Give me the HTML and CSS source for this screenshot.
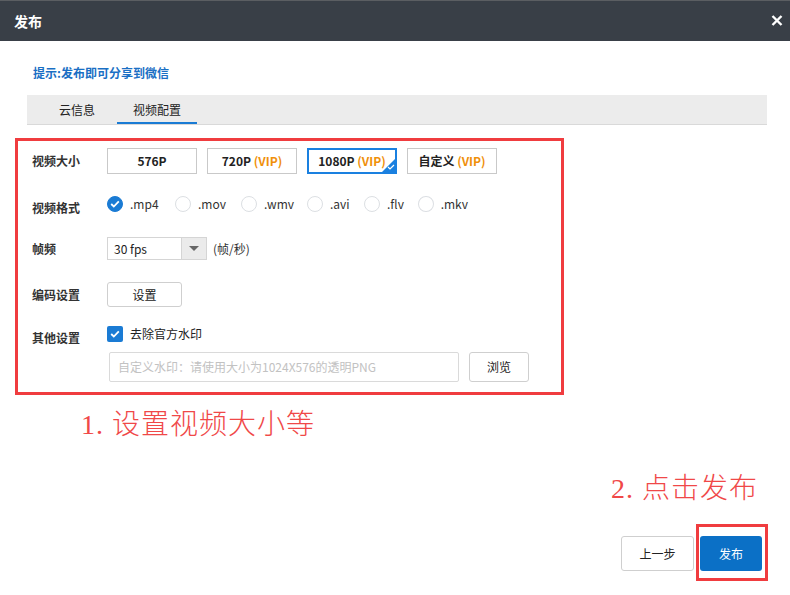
FILE: index.html
```html
<!DOCTYPE html>
<html lang="zh-CN">
<head>
<meta charset="utf-8">
<title>发布</title>
<link rel="stylesheet" href="styles.css">
</head>
<body>
<div class="dialog">
  <header class="titlebar">
    <span class="title">发布</span>
    <svg class="close" width="12" height="11" viewBox="0 0 12 11"><path d="M1.5 1 L10.5 10 M10.5 1 L1.5 10" stroke="#fff" stroke-width="2.4" fill="none"/></svg>
  </header>
  <main class="content">
    <p class="hint">提示:发布即可分享到微信</p>
    <nav class="tabs">
      <span class="tab">云信息</span>
      <span class="tab active">视频配置</span>
    </nav>
    <section class="form">
      <div class="row row-size">
        <span class="label">视频大小</span>
        <div class="sizes">
          <span class="size-btn">576P</span>
          <span class="size-btn">720P <em>(VIP)</em></span>
          <span class="size-btn selected">1080P <em>(VIP)</em>
            <span class="corner"><svg width="8" height="6" viewBox="0 0 8 6"><path d="M1 3 L3 5 L7 1" stroke="#fff" stroke-width="1.2" fill="none"/></svg></span>
          </span>
          <span class="size-btn">自定义 <em>(VIP)</em></span>
        </div>
      </div>
      <div class="row row-format">
        <span class="label">视频格式</span>
        <div class="radios">
          <span class="radio r-mp4 checked"><span class="dot"><svg width="10" height="8" viewBox="0 0 10 8"><path d="M1.2 4 L3.8 6.5 L8.8 1.3" stroke="#fff" stroke-width="1.8" fill="none"/></svg></span>.mp4</span>
          <span class="radio r-mov"><span class="dot"></span>.mov</span>
          <span class="radio r-wmv"><span class="dot"></span>.wmv</span>
          <span class="radio r-avi"><span class="dot"></span>.avi</span>
          <span class="radio r-flv"><span class="dot"></span>.flv</span>
          <span class="radio r-mkv"><span class="dot"></span>.mkv</span>
        </div>
      </div>
      <div class="row row-fps">
        <span class="label">帧频</span>
        <div class="select">
          <span class="select-value">30 fps</span>
          <span class="select-arrow"><span class="tri"></span></span>
        </div>
        <span class="unit">(帧/秒)</span>
      </div>
      <div class="row row-encode">
        <span class="label">编码设置</span>
        <span class="btn btn-set">设置</span>
      </div>
      <div class="row row-other">
        <span class="label">其他设置</span>
        <span class="checkbox"><svg width="10" height="8" viewBox="0 0 10 8"><path d="M1.2 4 L3.8 6.5 L8.8 1.3" stroke="#fff" stroke-width="1.8" fill="none"/></svg></span>
        <span class="check-text">去除官方水印</span>
      </div>
      <div class="row row-watermark">
        <span class="input">自定义水印：请使用大小为1024X576的透明PNG</span>
        <span class="btn btn-browse">浏览</span>
      </div>
    </section>
    <div class="note note1">1. 设置视频大小等</div>
    <div class="note note2">2. 点击发布</div>
    <footer class="actions">
      <span class="btn btn-prev">上一步</span>
      <span class="publish-wrap"><span class="btn btn-publish">发布</span></span>
    </footer>
  </main>
</div>
</body>
</html>
```
FILE: styles.css
```css
html, body {
  margin: 0;
  padding: 0;
  background: #fff;
}
body {
  width: 790px;
  height: 595px;
  overflow: hidden;
  font-family: "Noto Sans CJK SC", "Liberation Sans", sans-serif;
  font-size: 12px;
  color: #333;
}
.dialog {
  width: 790px;
  height: 595px;
  display: flex;
  flex-direction: column;
}
.titlebar {
  height: 40px;
  border-top: 1px solid #5b5e62;
  background: #393f47;
  display: flex;
  align-items: center;
  justify-content: space-between;
  padding: 0 7px 0 14px;
}
.title {
  color: #fff;
  font-size: 14px;
  font-weight: bold;
  line-height: 16px;
}
.close {
  display: block;
  margin-top: -1px;
}
.content {
  position: relative;
  flex: 1;
  display: flex;
  flex-direction: column;
}
.hint {
  margin: 24px 0 0 33px;
  line-height: 16px;
  font-size: 12px;
  font-weight: bold;
  color: #1a6fc4;
}
.tabs {
  margin: 14px 0 0 27px;
  width: 730px;
  height: 29px;
  padding-left: 10px;
  background: #ececec;
  border-bottom: 1px solid #d9d9d9;
  display: flex;
}
.tab {
  width: 80px;
  text-align: center;
  line-height: 29px;
  color: #222;
  font-size: 12px;
  box-sizing: border-box;
}
.tab.active {
  border-bottom: 2px solid #1a7bd4;
}
.form {
  margin: 13px 0 0 15px;
  width: 529px;
  height: 244px;
  border: 3px solid #f03c3f;
  padding: 7px 0 0 14px;
  display: flex;
  flex-direction: column;
}
.row {
  display: flex;
  align-items: center;
}
.label {
  width: 75px;
  font-weight: bold;
  color: #333;
  line-height: 16px;
  flex: none;
}
.sizes {
  display: flex;
  gap: 10px;
}
.size-btn {
  position: relative;
  width: 90px;
  height: 26px;
  box-sizing: border-box;
  border: 1px solid #c9c9c9;
  text-align: center;
  line-height: 24px;
  font-weight: bold;
  color: #222;
}
.size-btn em {
  font-style: normal;
  color: #f0900a;
}
.size-btn.selected {
  border: 2px solid #1a80e0;
  line-height: 22px;
}
.corner {
  position: absolute;
  right: 0;
  bottom: 0;
  width: 0;
  height: 0;
  border-left: 13px solid transparent;
  border-bottom: 13px solid #1a80e0;
}
.corner svg {
  position: absolute;
  left: -8px;
  top: 5px;
}
.row-format {
  margin-top: 19px;
  height: 22px;
}
.row-format .label {
  margin-top: 8px;
}
.radios {
  display: flex;
}
.radio {
  display: flex;
  align-items: center;
  height: 16px;
  line-height: 16px;
  color: #333;
  flex: none;
}
.r-mp4 { width: 68px; }
.r-mov { width: 66px; }
.r-wmv { width: 66px; }
.r-avi { width: 57px; }
.r-flv { width: 54px; }
.r-mkv { width: 50px; }
.dot {
  width: 16px;
  height: 16px;
  box-sizing: border-box;
  border: 1px solid #dcdfe3;
  border-radius: 50%;
  margin-right: 7px;
  display: flex;
  align-items: center;
  justify-content: center;
}
.radio.checked .dot {
  background: #1a7bd4;
  border-color: #1a7bd4;
}
.row-fps {
  margin-top: 22px;
}
.select {
  width: 100px;
  height: 23px;
  box-sizing: border-box;
  border: 1px solid #d5d5d5;
  display: flex;
}
.select-value {
  flex: 1;
  padding-left: 6px;
  line-height: 21px;
  color: #222;
}
.select-arrow {
  width: 24px;
  background: #ebebeb;
  border-left: 1px solid #d5d5d5;
  display: flex;
  align-items: center;
  justify-content: center;
}
.tri {
  width: 0;
  height: 0;
  border-left: 5px solid transparent;
  border-right: 5px solid transparent;
  border-top: 5px solid #666;
}
.unit {
  margin-left: 6px;
  color: #333;
}
.btn {
  box-sizing: border-box;
  border: 1px solid #cfcfcf;
  border-radius: 3px;
  background: #fff;
  text-align: center;
  color: #222;
  display: inline-block;
}
.row-encode {
  margin-top: 22px;
}
.btn-set {
  width: 75px;
  height: 25px;
  line-height: 23px;
}
.row-other {
  margin-top: 19px;
  height: 16px;
}
.row-other .label {
  margin-top: 8px;
}
.checkbox {
  width: 16px;
  height: 16px;
  border-radius: 2px;
  background: #1a7bd4;
  display: flex;
  align-items: center;
  justify-content: center;
  margin-right: 7px;
}
.check-text {
  line-height: 16px;
  color: #222;
}
.row-watermark {
  margin-top: 10px;
  padding-left: 77px;
}
.input {
  width: 350px;
  height: 30px;
  box-sizing: border-box;
  border: 1px solid #dadada;
  border-radius: 2px;
  padding-left: 8px;
  line-height: 28px;
  color: #c2c2c2;
}
.btn-browse {
  margin-left: 10px;
  width: 60px;
  height: 30px;
  line-height: 28px;
}
.note {
  font-family: "Liberation Serif", "Noto Sans CJK SC", serif;
  font-weight: 300;
  font-size: 28px;
  line-height: 32px;
  letter-spacing: 1px;
  color: #f04848;
}
.note1 {
  margin: 14px 0 0 81px;
}
.note2 {
  margin: 32px 0 0 611px;
}
.actions {
  margin-top: 31px;
  display: flex;
  justify-content: flex-end;
  padding-right: 28px;
  gap: 6px;
}
.btn-prev {
  width: 73px;
  height: 35px;
  line-height: 33px;
  font-size: 12px;
}
.publish-wrap {
  position: relative;
  display: inline-block;
}
.publish-wrap::after {
  content: "";
  position: absolute;
  left: -4px;
  right: -6px;
  top: -12px;
  bottom: -10px;
  border: 3px solid #f03c3f;
}
.btn-publish {
  width: 62px;
  height: 35px;
  line-height: 35px;
  border: none;
  background: #0b70c6;
  color: #fff;
  font-size: 12px;
}
```
